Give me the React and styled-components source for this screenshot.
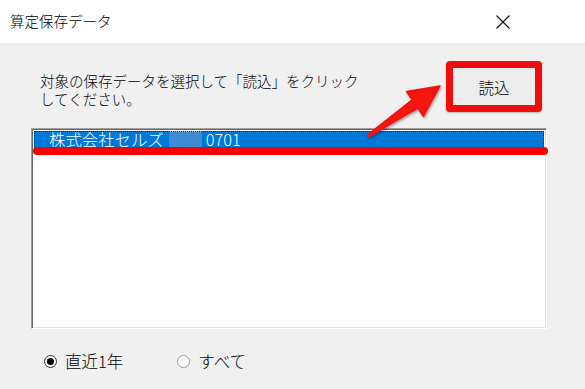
import React from "react";
import styled, { createGlobalStyle } from "styled-components";

const Global = createGlobalStyle`
  html, body { margin: 0; padding: 0; background: #f0f0f0; }
  body { font-family: "Noto Sans CJK JP", "Noto Sans", sans-serif; color: #000; font-weight: 300; }
`;

const Window = styled.div`
  position: relative;
  width: 585px;
  height: 389px;
  display: flex;
  flex-direction: column;
  background: #f0f0f0;
  overflow: hidden;
`;

const TitleBar = styled.div`
  height: 43px;
  background: #fff;
  display: flex;
  align-items: center;
  justify-content: space-between;
  padding-left: 10px;
  box-sizing: border-box;
`;

const Title = styled.div`
  font-size: 14.5px;
  line-height: 20px;
  margin-top: -2px;
`;

const CloseBox = styled.div`
  width: 60px;
  height: 43px;
  display: flex;
  align-items: center;
  justify-content: center;
  margin-right: 52px;
`;

const Body = styled.div`
  flex: 1;
  display: flex;
  flex-direction: column;
  padding: 0 38px 0 31px;
`;

const TopRow = styled.div`
  display: flex;
  justify-content: space-between;
  height: 85px;
`;

const Instruction = styled.div`
  padding: 30px 0 0 9px;
  display: flex;
  flex-direction: column;
  gap: 1px;
`;

const InstructionLine = styled.div`
  font-size: 14.5px;
  line-height: 16.5px;
  white-space: nowrap;
`;

const ButtonFrame = styled.div`
  margin-top: 18px;
  margin-right: 5px;
  width: 96px;
  height: 51px;
  box-sizing: border-box;
  border: 7px solid #f20d0d;
  border-radius: 4px;
  background: #ececec;
  display: flex;
  align-items: center;
  justify-content: center;
  font-size: 15.5px;
  box-shadow: 0 1px 2px rgba(0,0,0,0.25);
`;

const ListBox = styled.div`
  position: relative;
  width: 516px;
  height: 201px;
  box-sizing: border-box;
  background: #fff;
  border-top: 1px solid #a0a0a0;
  border-left: 1px solid #a0a0a0;
  border-right: 1px solid #fff;
  border-bottom: 1px solid #fff;
  box-shadow: inset 1px 1px 0 #696969, inset -1px -1px 0 #e3e3e3;
  padding: 2px 2px;
`;

const Row = styled.div`
  height: 17px;
  box-sizing: border-box;
  display: flex;
  align-items: center;
  padding-left: 15px;
  background: ${(p) => (p.$selected ? "#0078d7" : "transparent")};
  color: ${(p) => (p.$selected ? "#fff" : "#000")};
  outline: ${(p) => (p.$selected ? "1px dotted #222" : "none")};
  outline-offset: -1px;
  font-size: 16.4px;
  line-height: 17px;
  white-space: nowrap;
`;

const Redacted = styled.span`
  display: inline-block;
  width: 33px;
  height: 17px;
  margin: 0 4px 0 5px;
  background: #3f8bd3;
  border-top: 1px solid #a9c9ea;
  box-sizing: border-box;
`;

const Underline = styled.div`
  position: absolute;
  left: 1px;
  right: -2px;
  top: 18px;
  height: 8px;
  background: #fa0000;
  border-radius: 4px;
`;

const RadioRow = styled.div`
  display: flex;
  align-items: center;
  gap: 54px;
  margin: 22px 0 0 13px;
`;

const RadioItem = styled.label`
  display: flex;
  align-items: center;
  gap: 8px;
  font-size: 16.5px;
  line-height: 20px;
`;

const RadioCircle = styled.span`
  width: 13px;
  height: 13px;
  box-sizing: border-box;
  border-radius: 50%;
  border: 1px solid ${(p) => (p.$checked ? "#333" : "#9a9a9a")};
  background: #fff;
  display: flex;
  align-items: center;
  justify-content: center;
  &::after {
    content: "";
    width: 7px;
    height: 7px;
    border-radius: 50%;
    background: ${(p) => (p.$checked ? "#000" : "transparent")};
  }
`;

const Overlay = styled.svg`
  position: absolute;
  left: 0;
  top: 0;
  pointer-events: none;
`;

export default function App() {
  return (
    <>
      <Global />
      <Window>
        <TitleBar>
          <Title>算定保存データ</Title>
          <CloseBox>
            <svg width="14" height="14" viewBox="0 0 14 14">
              <path d="M0.5 0.5 L13.5 13.5 M13.5 0.5 L0.5 13.5" stroke="#111" strokeWidth="1.1" fill="none" />
            </svg>
          </CloseBox>
        </TitleBar>
        <Body>
          <TopRow>
            <Instruction>
              <InstructionLine>対象の保存データを選択して「読込」をクリック</InstructionLine>
              <InstructionLine>してください。</InstructionLine>
            </Instruction>
            <ButtonFrame>読込</ButtonFrame>
          </TopRow>
          <ListBox>
            <Row $selected>
              株式会社セルズ<Redacted />0701
            </Row>
            <Underline />
          </ListBox>
          <RadioRow>
            <RadioItem>
              <RadioCircle $checked />
              直近1年
            </RadioItem>
            <RadioItem>
              <RadioCircle />
              すべて
            </RadioItem>
          </RadioRow>
        </Body>
        <Overlay width="585" height="389" viewBox="0 0 585 389">
          <defs>
            <filter id="sh" x="-20%" y="-20%" width="140%" height="140%">
              <feDropShadow dx="1" dy="1.5" stdDeviation="1.2" floodColor="#000" floodOpacity="0.35" />
            </filter>
          </defs>
          <path
            d="M367.4 135.2 L412.2 99.9 L406.6 91.6 L440 86 L423.4 116.4 L417.8 108.1 L368.6 136.8 Z"
            fill="#f5120f"
            stroke="#f5120f"
            strokeWidth="1.5"
            strokeLinejoin="round"
            filter="url(#sh)"
          />
        </Overlay>
      </Window>
    </>
  );
}
